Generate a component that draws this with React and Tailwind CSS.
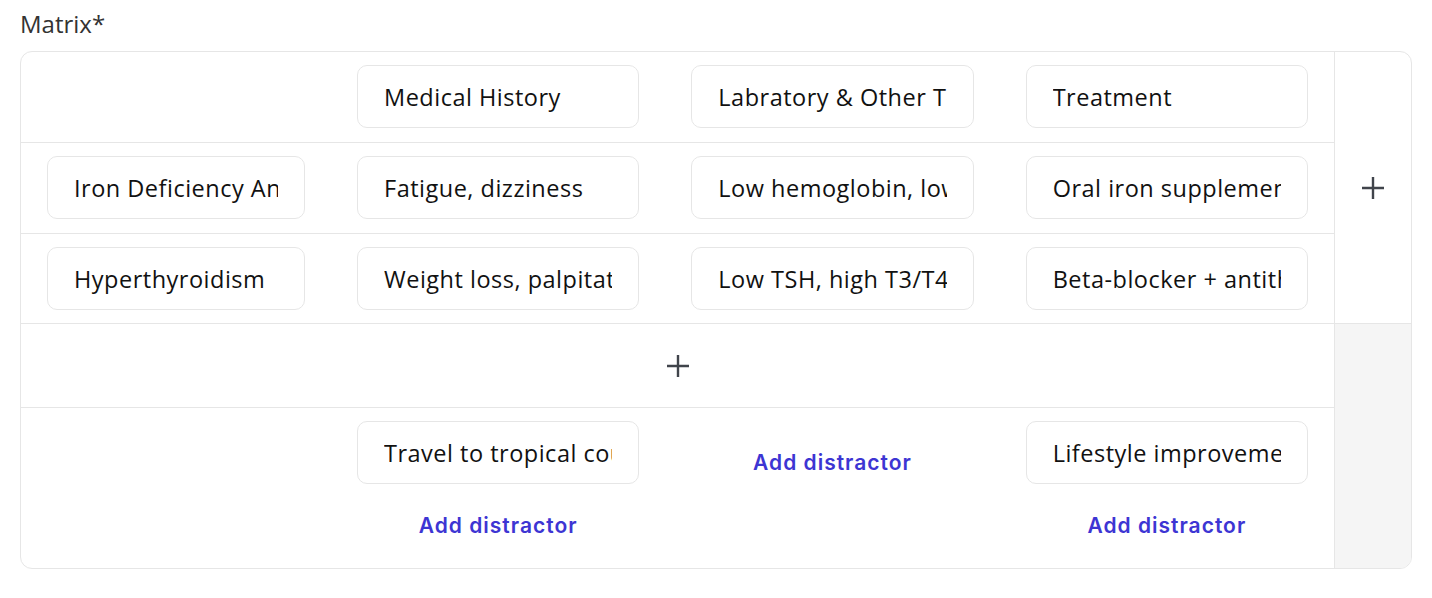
import { useState } from "react"

const font = { fontFamily: '"Open Sans", "Lato", sans-serif' }

const PlusIcon = () => (
    <svg width="24" height="24" viewBox="0 0 24 24" className="text-[#40444b]">
        <path d="M12 1v22M1 12h22" stroke="currentColor" strokeWidth="2.4" fill="none" />
    </svg>
)

const Cell = ({ value }) => (
    <input
        readOnly
        value={value}
        className="w-full h-[63px] px-[26px] rounded-[10px] border border-[#e6e6e6] bg-white text-[23.5px] tracking-[0.5px] text-[#111] outline-none"
    />
)

const AddDistractor = () => (
    <button className="h-[84px] w-full flex items-center justify-center text-[21px] font-semibold text-[#3d35d3] tracking-[1px]"
        style={{ fontFamily: '"Inter", "Lato", sans-serif' }}>
        Add distractor
    </button>
)

const Matrix = () => {
    const [headers] = useState(['Medical History', 'Labratory & Other Tests', 'Treatment'])
    const [rows] = useState([
        ['Iron Deficiency Anemia', 'Fatigue, dizziness', 'Low hemoglobin, low ferritin', 'Oral iron supplements'],
        ['Hyperthyroidism', 'Weight loss, palpitations', 'Low TSH, high T3/T4', 'Beta-blocker + antithyroid drugs'],
    ])
    const distractors = ['Travel to tropical country', null, 'Lifestyle improvements']

    return (
        <div className="w-[1392px] flex border border-[#e6e6e6] rounded-xl overflow-hidden">
            <div className="flex-1">
                <div className="grid grid-cols-[310px_1fr_1fr_1fr] border-b border-[#e6e6e6]">
                    <div />
                    {headers.map((h) => (
                        <div key={h} className="px-[26px] pt-[13px] pb-[14px]"><Cell value={h} /></div>
                    ))}
                </div>
                {rows.map((r, i) => (
                    <div key={i} className={`grid grid-cols-[310px_1fr_1fr_1fr] border-b border-[#e6e6e6] ${i === 0 ? 'pb-[1px]' : ''}`}>
                        {r.map((c) => (
                            <div key={c} className="px-[26px] py-[13px]"><Cell value={c} /></div>
                        ))}
                    </div>
                ))}
                <div className="h-[84px] flex items-center justify-center border-b border-[#e6e6e6]">
                    <PlusIcon />
                </div>
                <div className="grid grid-cols-[310px_1fr_1fr_1fr]">
                    <div />
                    {distractors.map((d, i) => (
                        <div key={i} className="px-[26px] pt-[13px]">
                            {d && <Cell value={d} />}
                            <AddDistractor />
                        </div>
                    ))}
                </div>
            </div>
            <div className="w-[77px] flex flex-col border-l border-[#e6e6e6]">
                <div className="h-[272px] flex items-center justify-center border-b border-[#e6e6e6]">
                    <PlusIcon />
                </div>
                <div className="flex-1 bg-[#f5f5f5]" />
            </div>
        </div>
    )
}

export default function App() {
    return (
        <div className="min-h-screen bg-white pl-[20px] pt-[9px]" style={font}>
            <div className="text-[24px] font-medium text-[#333] mb-[12px] leading-[30px]">Matrix*</div>
            <Matrix />
        </div>
    )
}
